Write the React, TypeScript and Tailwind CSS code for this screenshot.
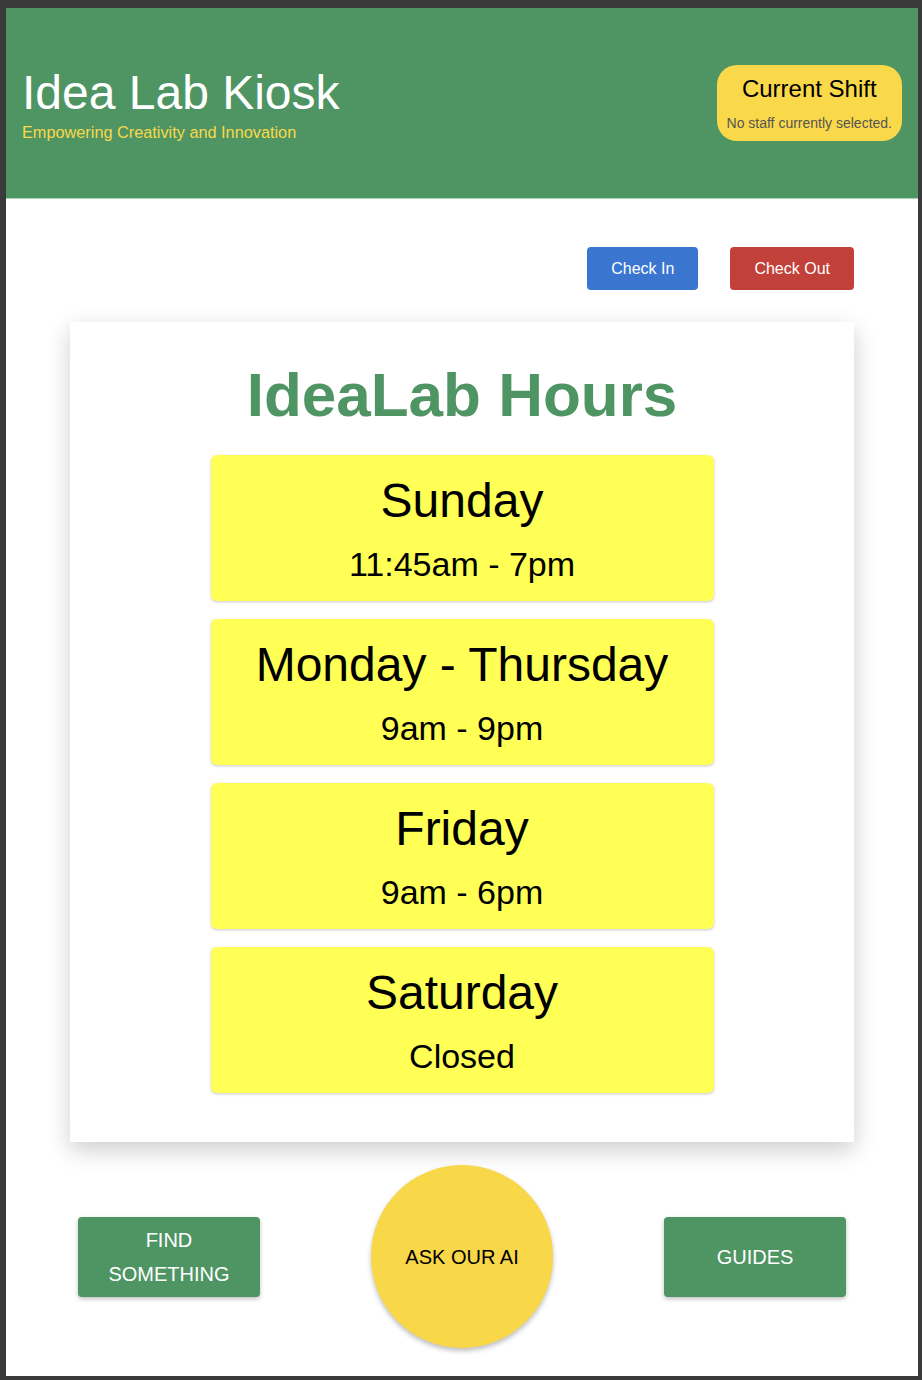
import React from 'react';

const hours = [
  { day: 'Sunday', time: '11:45am - 7pm' },
  { day: 'Monday - Thursday', time: '9am - 9pm' },
  { day: 'Friday', time: '9am - 6pm' },
  { day: 'Saturday', time: 'Closed' },
];

const Header: React.FC = () => (
  <header className="h-[191px] bg-[#4f9564] border-b border-[#a9d0b3] flex items-center justify-between pl-4 pr-4">
    <div className="flex flex-col">
      <h1 className="text-[48px] leading-[55px] text-white">Idea Lab Kiosk</h1>
      <p className="mt-[3px] text-[16.3px] leading-[18px] text-[#f9d849]">Empowering Creativity and Innovation</p>
    </div>
    <div className="bg-[#f9d849] rounded-[20px] px-[10px] pt-[10px] pb-[10px] text-center">
      <h2 className="text-[24px] leading-[28px] text-black">Current Shift</h2>
      <p className="mt-[12px] text-[14px] leading-[16px] text-[#555555]">No staff currently selected.</p>
    </div>
  </header>
);

const HoursCard: React.FC = () => (
  <div className="w-[784px] mx-auto mt-8 bg-white shadow-[0_8px_22px_rgba(0,0,0,0.2)] pt-[37px] pb-[49px]">
    <h2 className="text-center text-[62px] leading-[71px] font-bold text-[#4f9564]">IdeaLab Hours</h2>
    <div className="mt-[25px] w-[503px] mx-auto flex flex-col gap-[18px]">
      {hours.map((h) => (
        <div
          key={h.day}
          className="bg-[#ffff55] rounded-md shadow-[0_1px_3px_rgba(0,0,0,0.22)] pt-[18px] pb-[17px] flex flex-col items-center gap-[17px] text-black"
        >
          <div className="text-[48px] leading-[55px]">{h.day}</div>
          <div className="text-[34px] leading-[39px]">{h.time}</div>
        </div>
      ))}
    </div>
  </div>
);

const App: React.FC = () => {
  return (
    <div className="h-[1380px] bg-[#3a3a3a] pt-[8px] pl-[6px] pr-[4px] pb-[4px] font-['Liberation_Sans',Arial,sans-serif]">
      <div className="h-full bg-white flex flex-col">
        <Header />

        <div className="w-[784px] mx-auto mt-12 flex justify-end gap-8">
          <button className="bg-[#3a76d0] text-white text-[16px] leading-[19px] px-6 py-3 rounded">Check In</button>
          <button className="bg-[#c2403a] text-white text-[16px] leading-[19px] px-6 py-3 rounded">Check Out</button>
        </div>

        <HoursCard />

        <div className="mt-[23px] flex justify-center items-center gap-[111px]">
          <button className="w-[182px] h-[80px] bg-[#4f9564] text-white text-[20px] leading-[34px] uppercase rounded shadow-[0_2px_4px_rgba(0,0,0,0.25)]">
            Find<br />Something
          </button>
          <button className="w-[182px] h-[183px] rounded-full bg-[#f8d748] text-black text-[20px] uppercase shadow-[0_3px_5px_rgba(0,0,0,0.25)]">
            Ask our AI
          </button>
          <button className="w-[182px] h-[80px] bg-[#4f9564] text-white text-[20px] uppercase rounded shadow-[0_2px_4px_rgba(0,0,0,0.25)]">
            Guides
          </button>
        </div>
      </div>
    </div>
  );
};

export default App;
